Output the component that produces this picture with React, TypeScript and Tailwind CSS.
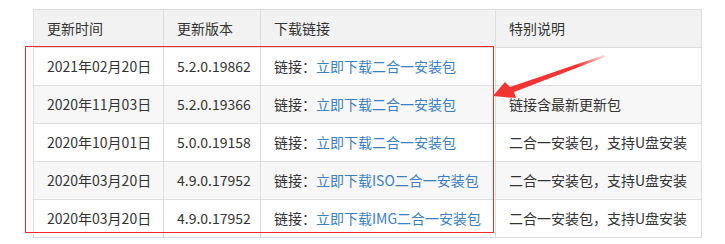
import React from "react";

type Row = {
  date: string;
  version: string;
  link: string;
  note: string;
};

const rows: Row[] = [
  { date: "2021年02月20日", version: "5.2.0.19862", link: "立即下载二合一安装包", note: "" },
  { date: "2020年11月03日", version: "5.2.0.19366", link: "立即下载二合一安装包", note: "链接含最新更新包" },
  { date: "2020年10月01日", version: "5.0.0.19158", link: "立即下载二合一安装包", note: "二合一安装包，支持U盘安装" },
  { date: "2020年03月20日", version: "4.9.0.17952", link: "立即下载ISO二合一安装包", note: "二合一安装包，支持U盘安装" },
  { date: "2020年03月20日", version: "4.9.0.17952", link: "立即下载IMG二合一安装包", note: "二合一安装包，支持U盘安装" },
];

const cell = "border border-[#dddddd] h-[38px] pl-[13px] pr-2 align-middle whitespace-nowrap";

export default function App() {
  return (
    <div
      className="relative w-[725px] h-[244px] bg-white text-[14px] text-[#333333] overflow-hidden"
      style={{ fontFamily: '"Noto Sans CJK SC", "Noto Sans", sans-serif' }}
    >
      <div className="pl-[33px] pt-[9px]">
        <table className="border-collapse table-fixed w-[668px]">
          <colgroup>
            <col className="w-[130px]" />
            <col className="w-[97px]" />
            <col className="w-[235px]" />
            <col className="w-[206px]" />
          </colgroup>
          <thead>
            <tr className="bg-[#f2f2f2] text-left">
              <th className={`${cell} font-normal`}>更新时间</th>
              <th className={`${cell} font-normal`}>更新版本</th>
              <th className={`${cell} font-normal`}>下载链接</th>
              <th className={`${cell} font-normal`}>特别说明</th>
            </tr>
          </thead>
          <tbody>
            {rows.map((r, i) => (
              <tr key={i} className={i % 2 === 1 ? "bg-[#f7f7f7]" : "bg-white"}>
                <td className={cell}>{r.date}</td>
                <td className={cell}>{r.version}</td>
                <td className={cell}>
                  链接：<a className="text-[#3b7fc4] cursor-pointer">{r.link}</a>
                </td>
                <td className={cell}>{r.note}</td>
              </tr>
            ))}
          </tbody>
        </table>
      </div>

      {/* highlight frame around the download rows */}
      <div className="absolute left-[25px] top-[46px] w-[469px] h-[187px] border border-[#ee2b2b] pointer-events-none" />

      {/* pointer arrow */}
      <svg
        className="absolute left-0 top-0 pointer-events-none"
        width="725"
        height="244"
        viewBox="0 0 725 244"
      >
        <defs>
          <linearGradient id="shaft" x1="493" y1="96" x2="605" y2="55" gradientUnits="userSpaceOnUse">
            <stop offset="0" stopColor="#f43333" />
            <stop offset="0.75" stopColor="#f43333" />
            <stop offset="1" stopColor="#f43333" stopOpacity="0.15" />
          </linearGradient>
        </defs>
        <polygon
          points="493,96 505,82 510,87 604,55 605,57 514,92 516,98"
          fill="url(#shaft)"
        />
      </svg>
    </div>
  );
}
